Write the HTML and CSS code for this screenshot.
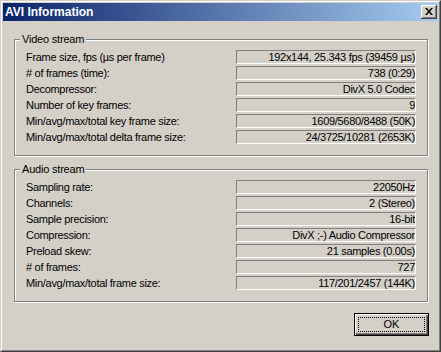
FILE: index.html
```html
<!DOCTYPE html>
<html lang="en">
<head>
    <meta charset="UTF-8">
    <title>AVI Information</title>
    <link rel="stylesheet" href="styles.css">
</head>
<body>
    <div class="window">
        <div class="frame">
            <div class="titlebar">
                <span class="title">AVI Information</span>
                <button class="close-button" aria-label="Close">
                    <svg width="8" height="7" viewBox="0 0 8 7">
                        <path d="M0 0h2l2 2.5 2-2.5h2l-3 3.5 3 3.5h-2l-2-2.5-2 2.5h-2l3-3.5z" fill="#000"/>
                    </svg>
                </button>
            </div>

            <div class="content">
                <div class="group">
                    <span class="group-title">Video stream</span>
                    <div class="rows">
                        <span class="label">Frame size, fps (µs per frame)</span>
                        <span class="value">192x144, 25.343 fps (39459 µs)</span>
                        <span class="label"># of frames (time):</span>
                        <span class="value">738 (0:29)</span>
                        <span class="label">Decompressor:</span>
                        <span class="value">DivX 5.0 Codec</span>
                        <span class="label">Number of key frames:</span>
                        <span class="value">9</span>
                        <span class="label">Min/avg/max/total key frame size:</span>
                        <span class="value">1609/5680/8488 (50K)</span>
                        <span class="label">Min/avg/max/total delta frame size:</span>
                        <span class="value">24/3725/10281 (2653K)</span>
                    </div>
                </div>

                <div class="group audio">
                    <span class="group-title">Audio stream</span>
                    <div class="rows">
                        <span class="label">Sampling rate:</span>
                        <span class="value">22050Hz</span>
                        <span class="label">Channels:</span>
                        <span class="value">2 (Stereo)</span>
                        <span class="label">Sample precision:</span>
                        <span class="value">16-bit</span>
                        <span class="label">Compression:</span>
                        <span class="value">DivX ;-) Audio Compressor</span>
                        <span class="label">Preload skew:</span>
                        <span class="value">21 samples (0.00s)</span>
                        <span class="label"># of frames:</span>
                        <span class="value">727</span>
                        <span class="label">Min/avg/max/total frame size:</span>
                        <span class="value">117/201/2457 (144K)</span>
                    </div>
                </div>

                <div class="actions">
                    <button class="ok-button"><span class="focus">OK</span></button>
                </div>
            </div>
        </div>
    </div>
</body>
</html>
```

FILE: styles.css
```css
* {
    margin: 0;
    padding: 0;
    box-sizing: border-box;
}

body {
    font-family: "Liberation Sans", Arial, sans-serif;
    font-size: 11px;
    color: #000;
    background: #d4d0c8;
}

.window {
    width: 441px;
    height: 352px;
    border: 1px solid;
    border-color: #d4d0c8 #404040 #404040 #d4d0c8;
}

.frame {
    height: 100%;
    padding: 1px;
    border: 1px solid;
    border-color: #fff #808080 #808080 #fff;
    display: flex;
    flex-direction: column;
}

.titlebar {
    height: 18px;
    padding: 0 1px 0 2px;
    background: linear-gradient(to right, #0a246a, #a6caf0);
    display: flex;
    align-items: center;
    justify-content: space-between;
}

.title {
    color: #fff;
    font-weight: bold;
    font-size: 12px;
    line-height: 14px;
}

.close-button {
    width: 16px;
    height: 14px;
    border: none;
    background: #d4d0c8;
    box-shadow: inset -1px -1px 0 #404040, inset 1px 1px 0 #fff, inset -2px -2px 0 #808080;
    display: flex;
    align-items: center;
    justify-content: center;
    padding: 0 1px 1px 0;
}

.close-button svg {
    display: block;
}

.content {
    flex: 1;
    padding: 18px 10px 0 11px;
    display: flex;
    flex-direction: column;
}

.group {
    position: relative;
    border: 1px solid #808080;
    box-shadow: inset 1px 1px 0 #fff, 1px 1px 0 #fff;
    padding: 10px 11px 11px 11px;
}

.group.audio {
    margin-top: 13px;
}

.group-title {
    position: absolute;
    top: -8px;
    left: 5px;
    padding: 0 2px 0 2px;
    background: #d4d0c8;
    line-height: 14px;
    letter-spacing: -0.2px;
}

.rows {
    display: grid;
    grid-template-columns: 1fr 180px;
    grid-auto-rows: 14px;
    row-gap: 2px;
    letter-spacing: -0.3px;
}

.label {
    line-height: 14px;
    white-space: nowrap;
}

.value {
    border: 1px solid;
    border-color: #808080 #fff #fff #808080;
    line-height: 12px;
    text-align: right;
    white-space: nowrap;
    overflow: hidden;
}

.actions {
    display: flex;
    justify-content: flex-end;
    margin-top: 11px;
    margin-right: -1px;
}

.ok-button {
    width: 75px;
    height: 23px;
    border: 1px solid #000;
    background: #d4d0c8;
    box-shadow: inset 1px 1px 0 #fff, inset -1px -1px 0 #404040, inset -2px -2px 0 #808080;
    font-family: "Liberation Sans", Arial, sans-serif;
    font-size: 11px;
    color: #000;
    padding: 3px;
    display: flex;
}

.focus {
    flex: 1;
    border: 1px dotted #000;
    display: flex;
    align-items: center;
    justify-content: center;
    line-height: 13px;
}
```
